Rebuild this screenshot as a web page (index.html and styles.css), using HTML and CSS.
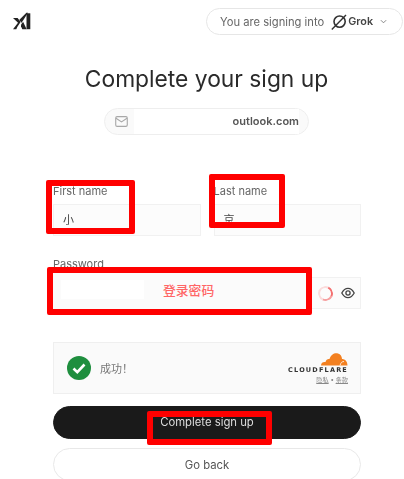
FILE: index.html
```html
<!DOCTYPE html>
<html lang="en">
<head>
	<meta charset="UTF-8">
	<title>Complete your sign up</title>
	<link rel="stylesheet" href="styles.css">
</head>
<body>
	<div class="page">
		<header class="top">
			<svg class="logo" viewBox="0 0 18 18" width="18" height="18">
				<path d="M0 6H4.600L7.600 10.100 4.300 14.900 3.300 17.200H0L5 10.800z" fill="#222"/>
				<path d="M8.100 12.400 L10.100 9.800 L13.600 17.200 H9.300 L8 14.300z" fill="#222"/>
				<path d="M6.200 8 L13.400 0.800 H15 L8.600 10.700z" fill="#222"/>
				<rect x="13.500" y="1.300" width="3.800" height="15.900" fill="#222"/>
			</svg>
			<div class="signing">
				<span>You are signing into</span>
				<svg class="grok" viewBox="0 0 16 16" width="16" height="16">
					<circle cx="8.600" cy="7.600" r="5.600" fill="none" stroke="#333" stroke-width="1.600"/>
					<path d="M0.800 15.400 L15 1" stroke="#333" stroke-width="1.400" fill="none"/>
				</svg>
				<b>Grok</b>
				<svg class="chev" viewBox="0 0 8 5" width="7" height="5">
					<path d="M1 1l3 3 3-3" fill="none" stroke="#777" stroke-width="1"/>
				</svg>
			</div>
		</header>

		<h1 class="title">Complete your sign up</h1>

		<div class="email">
			<svg viewBox="0 0 14 12" width="13" height="11">
				<rect x="0.700" y="0.700" width="12.600" height="10.600" rx="1.500" fill="none" stroke="#a8a8a8" stroke-width="1.200"/>
				<path d="M1 2.500l6 4 6-4" fill="none" stroke="#a8a8a8" stroke-width="1.200"/>
			</svg>
			<span class="email-mask"></span>
			<span class="email-text">outlook.com</span>
		</div>

		<form class="form">
			<div class="names">
				<div class="field">
					<label>First name</label>
					<div class="input">小</div>
				</div>
				<div class="field">
					<label>Last name</label>
					<div class="input">京</div>
				</div>
			</div>

			<div class="field pass-field">
				<label>Password</label>
				<div class="input pass">
					<span class="spinner"></span>
					<svg viewBox="0 0 14 14" width="14" height="14">
						<path d="M0.800 7C2.500 3.800 4.600 2.400 7 2.400S11.500 3.800 13.200 7C11.500 10.200 9.400 11.600 7 11.600S2.500 10.200 0.800 7z" fill="none" stroke="#444" stroke-width="1.300"/>
						<circle cx="7" cy="7" r="2.100" fill="none" stroke="#444" stroke-width="1.300"/>
					</svg>
				</div>
			</div>

			<div class="captcha">
				<div class="check">
					<svg viewBox="0 0 24 24" width="24" height="24">
						<circle cx="12" cy="12" r="12" fill="#1e8e3e"/>
						<path d="M6.500 12.500l3.800 3.700 7.200-7.700" fill="none" stroke="#fff" stroke-width="2.600"/>
					</svg>
					<span>成功！</span>
				</div>
				<div class="cf">
					<svg viewBox="0 0 28 14" width="28" height="14">
						<path d="M1 13.500C1 10.500 3.500 9.500 5.500 10 6 7.500 8 6.500 9.500 7 11 2 15 0.500 18 1.500 20.500 2.300 22 4.500 22 7 24.500 7 27.500 9 27.500 13.500z" fill="#f38020"/>
						<path d="M20 13.500C20.800 10.500 22 9.500 24 9.500" fill="none" stroke="#fff" stroke-width="0.800"/>
					</svg>
					<div class="cf-name">CLOUDFLARE</div>
					<div class="cf-links"><u>隐私</u> • <u>条款</u></div>
				</div>
			</div>

			<button class="btn btn-dark" type="button">Complete sign up</button>
			<button class="btn btn-light" type="button">Go back</button>
		</form>
	</div>

	<!-- red marks drawn over the screenshot -->
	<div class="mark mark-first"></div>
	<div class="mark mark-last"></div>
	<div class="mark mark-pass">
		<span class="pass-mask"></span>
		<span class="pass-note">登录密码</span>
	</div>
	<div class="mark mark-btn"></div>
</body>
</html>
```

FILE: styles.css
```css
*{
	margin: 0;
	padding: 0;
	box-sizing: border-box;
}
html, body{
	height: 100%;
	overflow: hidden;
	background: #fff;
}
body{
	font-family: Inter, "Noto Sans CJK SC", sans-serif;
	color: #333;
	position: relative;
}
.page{
	filter: blur(0.4px);
}
.top{
	display: flex;
	justify-content: space-between;
	padding: 8px 1px 0 13px;
}
.logo{
	margin-top: 4px;
}
.signing{
	width: 197px;
	height: 27px;
	border: 1px solid #e6e6e6;
	border-radius: 14px;
	display: flex;
	align-items: center;
	padding-left: 13px;
	font-size: 11.200px;
	color: #666;
}
.grok{
	margin-left: 7px;
}
.signing b{
	margin-left: 1px;
	font-size: 10.800px;
	font-weight: 600;
	color: #444;
}
.chev{
	margin-left: 7px;
}
.title{
	margin-top: 29px;
	text-align: center;
	font-size: 22.800px;
	line-height: 30px;
	font-weight: 400;
	color: #2a2a2a;
	padding-left: 9px;
}
.email{
	width: 205px;
	height: 27px;
	margin: 14px 0 0 104px;
	border: 1px solid #eee;
	border-radius: 14px;
	display: flex;
	align-items: center;
	padding: 0 9px 0 10px;
	background: #fafafa;
}
.email-mask{
	flex: 1;
	height: 25px;
	margin-left: 6px;
	background: #fff;
}
.email-text{
	font-size: 11px;
	font-weight: 600;
	color: #555;
	background: #fff;
	line-height: 25px;
}
.form{
	margin: 0 43px 0 53px;
	padding-top: 49px;
}
.names{
	display: flex;
	gap: 13px;
}
.field{
	flex: 1;
}
label{
	display: block;
	font-size: 11px;
	line-height: 14px;
	color: #666;
	margin-bottom: 6px;
}
.input{
	height: 32px;
	border: 1px solid #f1f1f1;
	background: #fcfcfc;
	padding-left: 9px;
	font-size: 11px;
	line-height: 30px;
	color: #444;
}
.pass-field{
	margin-top: 21px;
}
.pass{
	display: flex;
	align-items: center;
	justify-content: flex-end;
	gap: 8px;
	padding-right: 5px;
}
.spinner{
	width: 15px;
	height: 15px;
	border-radius: 50%;
	border: 2px solid #fbdcdc;
	border-right-color: #f47070;
	border-bottom-color: #f6a0a0;
	transform: rotate(-20deg);
}
.captcha{
	margin-top: 33px;
	height: 52px;
	border: 1px solid #efefef;
	background: #fafafa;
	display: flex;
	align-items: center;
	justify-content: space-between;
	padding: 0 12px 0 13px;
}
.check{
	display: flex;
	align-items: center;
	gap: 9px;
	font-size: 11px;
	color: #777;
}
.cf{
	display: flex;
	flex-direction: column;
	align-items: flex-end;
	width: 60px;
}
.cf-name{
	font-family: "DejaVu Sans", sans-serif;
	font-size: 6.500px;
	font-weight: 700;
	letter-spacing: 1.200px;
	line-height: 8px;
	color: #333;
	white-space: nowrap;
}
.cf-links{
	font-size: 6.200px;
	line-height: 8px;
	margin-top: 2px;
	color: #888;
}
.btn{
	display: block;
	width: 100%;
	height: 33px;
	border-radius: 17px;
	font-family: inherit;
	font-size: 11.300px;
}
.btn-dark{
	margin-top: 12px;
	background: #1a1a1a;
	border: 1px solid #1a1a1a;
	color: #ddd;
	padding-bottom: 1px;
}
.btn-light{
	margin-top: 9px;
	background: #fff;
	border: 1px solid #e8e8e8;
	color: #555;
}

/* marks */
.mark{
	position: absolute;
	border: 6px solid #f00;
	border-radius: 2px;
}
.mark-first{
	left: 46px;
	top: 180px;
	width: 89px;
	height: 54px;
}
.mark-last{
	left: 209px;
	top: 174px;
	width: 76px;
	height: 54px;
}
.mark-pass{
	left: 47px;
	top: 267px;
	width: 265px;
	height: 48px;
	display: flex;
	align-items: center;
	background: #fbfbfb;
	padding: 0 0 3px 8px;
}
.pass-mask{
	width: 83px;
	height: 19px;
	background: #fff;
}
.pass-note{
	margin-left: 19px;
	color: #f66;
	font-size: 12.800px;
	font-weight: 500;
}
.mark-btn{
	left: 147px;
	top: 411px;
	width: 125px;
	height: 34px;
}
```
